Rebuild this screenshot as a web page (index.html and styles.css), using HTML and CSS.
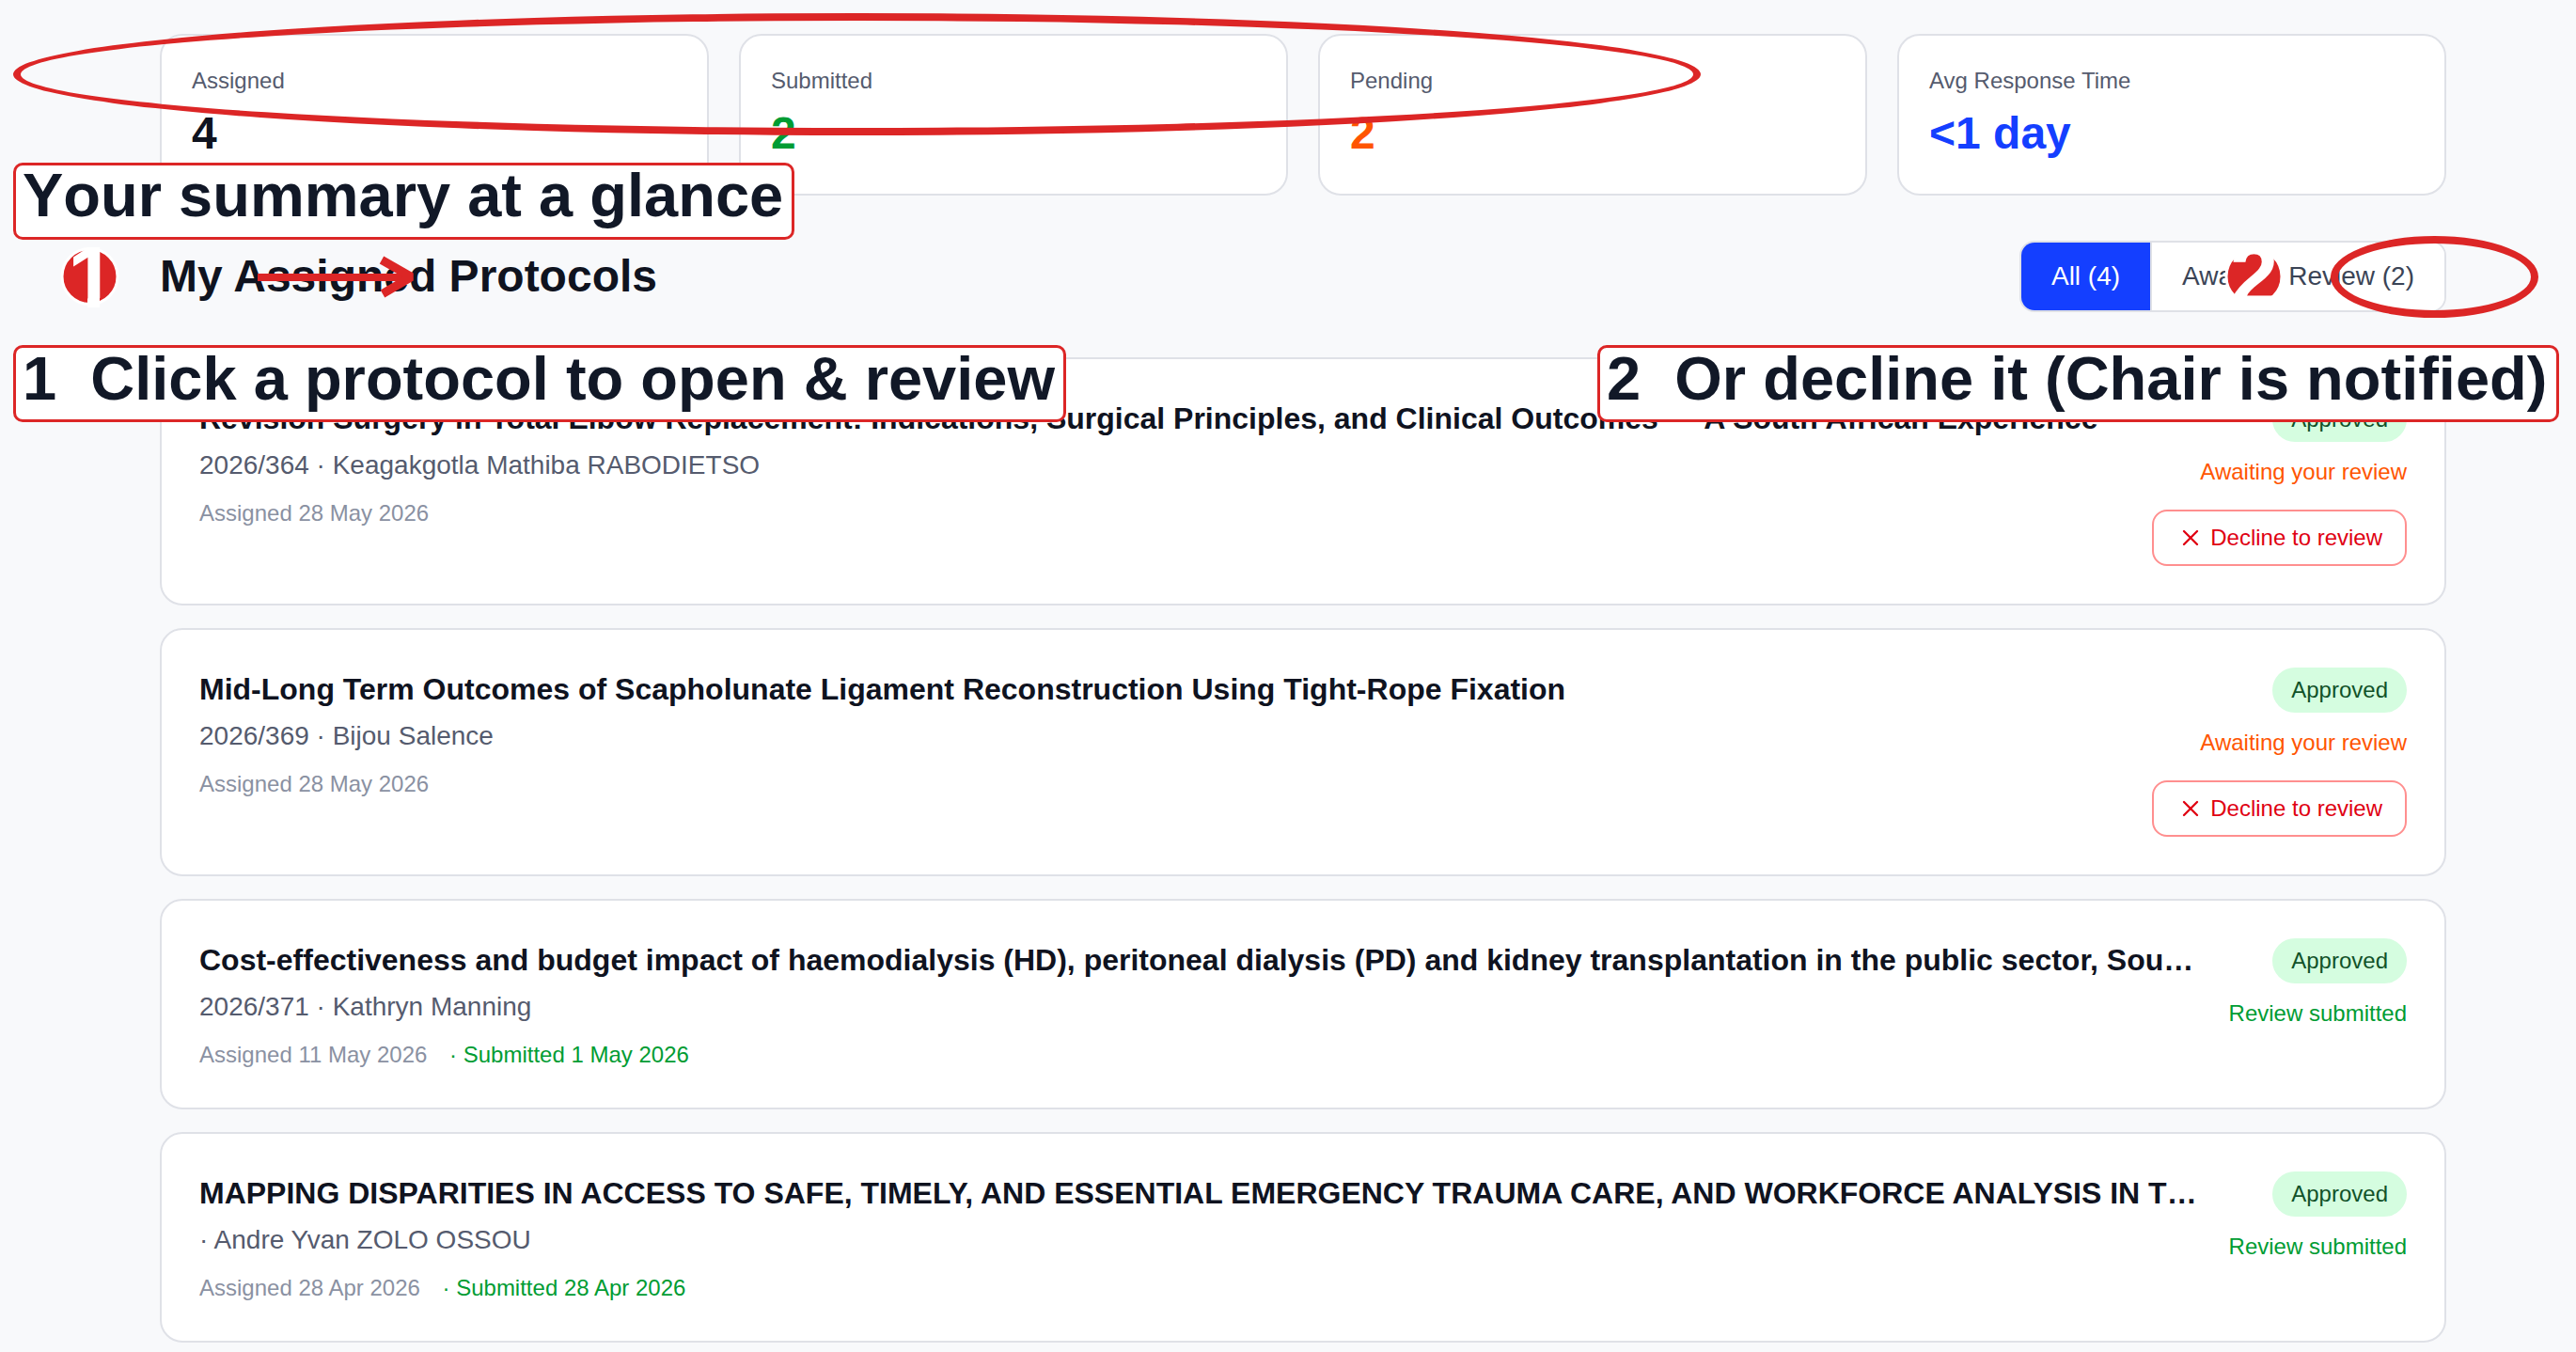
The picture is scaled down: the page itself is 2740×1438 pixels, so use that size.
FILE: index.html
```html
<!DOCTYPE html>
<html lang="en">
<head>
    <meta charset="UTF-8">
    <meta name="viewport" content="width=device-width, initial-scale=1.0">
    <title>My Assigned Protocols</title>
    <link rel="stylesheet" href="styles.css">
</head>
<body>

<div class="container">
    <!-- Summary cards -->
    <div class="stats">
        <div class="stat-card">
            <p class="stat-label">Assigned</p>
            <p class="stat-value">4</p>
        </div>
        <div class="stat-card">
            <p class="stat-label">Submitted</p>
            <p class="stat-value value-green">2</p>
        </div>
        <div class="stat-card">
            <p class="stat-label">Pending</p>
            <p class="stat-value value-orange">2</p>
        </div>
        <div class="stat-card">
            <p class="stat-label">Avg Response Time</p>
            <p class="stat-value value-blue">&lt;1 day</p>
        </div>
    </div>

    <div class="list-header">
        <h2>My Assigned Protocols</h2>
        <div class="filters">
            <button class="filter-btn active">All (4)</button>
            <button class="filter-btn">Awaiting Review (2)</button>
        </div>
    </div>

    <!-- Protocol list -->
    <div class="protocol-list">
        <div class="protocol-card">
            <div class="protocol-info">
                <h3>Revision Surgery in Total Elbow Replacement: Indications, Surgical Principles, and Clinical Outcomes — A South African Experience</h3>
                <p class="protocol-author">2026/364 · Keagakgotla Mathiba RABODIETSO</p>
                <p class="protocol-meta">Assigned 28 May 2026</p>
            </div>
            <div class="protocol-side">
                <span class="badge">Approved</span>
                <span class="status status-awaiting">Awaiting your review</span>
                <button class="decline-btn">
                    <svg class="icon-x" viewBox="0 0 24 24"><path d="M18 6 6 18M6 6l12 12"/></svg>
                    Decline to review
                </button>
            </div>
        </div>

        <div class="protocol-card">
            <div class="protocol-info">
                <h3>Mid-Long Term Outcomes of Scapholunate Ligament Reconstruction Using Tight-Rope Fixation</h3>
                <p class="protocol-author">2026/369 · Bijou Salence</p>
                <p class="protocol-meta">Assigned 28 May 2026</p>
            </div>
            <div class="protocol-side">
                <span class="badge">Approved</span>
                <span class="status status-awaiting">Awaiting your review</span>
                <button class="decline-btn">
                    <svg class="icon-x" viewBox="0 0 24 24"><path d="M18 6 6 18M6 6l12 12"/></svg>
                    Decline to review
                </button>
            </div>
        </div>

        <div class="protocol-card">
            <div class="protocol-info">
                <h3>Cost-effectiveness and budget impact of haemodialysis (HD), peritoneal dialysis (PD) and kidney transplantation in the public sector, South Africa</h3>
                <p class="protocol-author">2026/371 · Kathryn Manning</p>
                <p class="protocol-meta">Assigned 11 May 2026 <span class="submitted">· Submitted 1 May 2026</span></p>
            </div>
            <div class="protocol-side">
                <span class="badge">Approved</span>
                <span class="status status-submitted">Review submitted</span>
            </div>
        </div>

        <div class="protocol-card">
            <div class="protocol-info">
                <h3>MAPPING DISPARITIES IN ACCESS TO SAFE, TIMELY, AND ESSENTIAL EMERGENCY TRAUMA CARE, AND WORKFORCE ANALYSIS IN THE REGION</h3>
                <p class="protocol-author">· Andre Yvan ZOLO OSSOU</p>
                <p class="protocol-meta">Assigned 28 Apr 2026 <span class="submitted">· Submitted 28 Apr 2026</span></p>
            </div>
            <div class="protocol-side">
                <span class="badge">Approved</span>
                <span class="status status-submitted">Review submitted</span>
            </div>
        </div>
    </div>
</div>

<!-- Guide notes drawn over the page -->
<div class="ring ring-stats"></div>
<div class="ring ring-filter"></div>
<svg class="guide-marks" viewBox="0 0 2740 1438">
    <clipPath id="no-foot">
        <path d="M60 250H130V317H60ZM93 317H106V330H93Z"/>
    </clipPath>
    <path class="arrow" d="M274 295H434"/>
    <path class="arrow arrow-head" d="M406 276.5L437.5 294.5L407 312.5"/>
    <circle class="marker" cx="95.5" cy="294" r="29.5"/>
    <text class="marker-number" x="97.5" y="327" clip-path="url(#no-foot)">1</text>
    <circle class="marker" cx="2397.5" cy="294" r="29.5"/>
    <text class="marker-number" x="2397.5" y="325">2</text>
</svg>
<div class="guide-note note-summary">Your summary at a glance</div>
<div class="guide-note note-open">1  Click a protocol to open &amp; review</div>
<div class="guide-note note-decline">2  Or decline it (Chair is notified)</div>

</body>
</html>
```
FILE: styles.css
```css
* {
    margin: 0;
    padding: 0;
    box-sizing: border-box;
    font-family: "Liberation Sans", Arial, sans-serif;
}
body {
    position: relative;
    height: 1438px;
    background: #f8f9fb;
    color: #0f131f;
    overflow: hidden;
}
.container {
    width: 2432px;
    margin-left: 170px;
    padding-top: 36px;
}

/* Summary cards */
.stats {
    display: grid;
    grid-template-columns: repeat(4, 1fr);
    gap: 32px;
}
.stat-card {
    background: white;
    border: 2px solid #dfe1e7;
    border-radius: 24px;
    padding: 32px;
}
.stat-label {
    font-size: 24px;
    line-height: 32px;
    color: #555b6e;
}
.stat-value {
    margin-top: 8px;
    font-size: 48px;
    line-height: 64px;
    font-weight: bold;
}
.value-green {
    color: #009c33;
}
.value-orange {
    color: #ff5500;
}
.value-blue {
    color: #143fff;
}

/* Heading and filters */
.list-header {
    display: flex;
    align-items: center;
    justify-content: space-between;
    margin: 48px 0;
}
.list-header h2 {
    font-size: 48px;
    line-height: 64px;
}
.filters {
    display: flex;
    border: 2px solid #dfe1e7;
    border-radius: 16px;
    overflow: hidden;
}
.filter-btn {
    padding: 16px 32px;
    font-size: 28px;
    line-height: 40px;
    border: none;
    background: white;
    color: #3b4456;
    cursor: pointer;
}
.filter-btn + .filter-btn {
    border-left: 2px solid #dfe1e7;
}
.filter-btn.active {
    background: #143fff;
    color: white;
}

/* Protocol cards */
.protocol-list {
    display: flex;
    flex-direction: column;
    gap: 24px;
}
.protocol-card {
    display: flex;
    justify-content: space-between;
    gap: 32px;
    background: white;
    border: 2px solid #dfe1e7;
    border-radius: 24px;
    padding: 40px;
}
.protocol-info {
    flex: 1;
    min-width: 0;
}
.protocol-info h3 {
    font-size: 32px;
    line-height: 46px;
    white-space: nowrap;
    overflow: hidden;
    text-overflow: ellipsis;
}
.protocol-author {
    margin-top: 7px;
    font-size: 28px;
    line-height: 40px;
    color: #555b6e;
}
.protocol-meta {
    margin-top: 15px;
    font-size: 24px;
    line-height: 32px;
    color: #8a91a2;
}
.submitted {
    margin-left: 17px;
    color: #009c33;
}
.protocol-side {
    display: flex;
    flex-direction: column;
    align-items: flex-end;
    gap: 16px;
}
.badge {
    padding: 8px 20px;
    font-size: 24px;
    line-height: 32px;
    border-radius: 24px;
    background: #d5fde0;
    color: #115229;
}
.status {
    font-size: 24px;
    line-height: 32px;
}
.status-awaiting {
    color: #ff5500;
}
.status-submitted {
    color: #009c33;
}
.decline-btn {
    display: flex;
    align-items: center;
    gap: 7px;
    margin-top: 8px;
    padding: 12px 24px 12px 25px;
    font-size: 24px;
    line-height: 32px;
    border: 2px solid #ff8f8f;
    border-radius: 16px;
    background: white;
    color: #e00012;
    cursor: pointer;
}
.icon-x {
    width: 28px;
    height: 28px;
    fill: none;
    stroke: currentColor;
    stroke-width: 2;
    stroke-linecap: round;
}

/* Guide notes */
.guide-marks {
    position: absolute;
    top: 0;
    left: 0;
    width: 2740px;
    height: 1438px;
    pointer-events: none;
}
.ring {
    position: absolute;
    border: 8px solid #dc2626;
    border-radius: 50%;
    pointer-events: none;
}
.ring-stats {
    top: 14px;
    left: 14px;
    width: 1795px;
    height: 130px;
}
.ring-filter {
    top: 251px;
    left: 2479px;
    width: 221px;
    height: 87px;
}
.arrow {
    fill: none;
    stroke: #dc2626;
    stroke-width: 8;
}
.arrow-head {
    stroke-width: 9;
    stroke-linejoin: bevel;
}
.marker {
    fill: #dc2626;
    stroke: white;
    stroke-width: 3;
}
.marker-number {
    fill: white;
    font-size: 93px;
    font-weight: bold;
    text-anchor: middle;
}
.guide-note {
    position: absolute;
    height: 82px;
    padding-left: 7px;
    border: 3px solid #dc2626;
    border-radius: 10px;
    background: white;
    color: #111827;
    font-size: 65px;
    line-height: 65px;
    font-weight: bold;
    font-kerning: none;
    white-space: pre;
}
.note-summary {
    top: 173px;
    left: 14px;
    width: 831px;
    line-height: 63px;
}
.note-open {
    top: 367px;
    left: 14px;
    width: 1120px;
}
.note-decline {
    top: 367px;
    left: 1699px;
    width: 1023px;
}
```
